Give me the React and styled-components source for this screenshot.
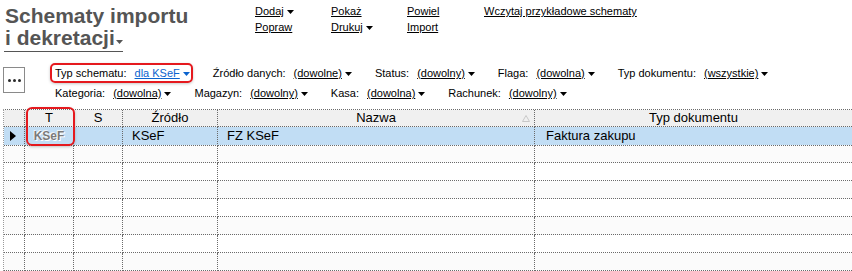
import React from 'react';
import styled, { createGlobalStyle } from 'styled-components';

const Global = createGlobalStyle`
  html, body { margin: 0; padding: 0; background: #fff; }
  body {
    font-family: "Liberation Sans", Arial, sans-serif;
    color: #000;
    width: 852px;
    height: 271px;
    overflow: hidden;
  }
  *, *::before, *::after { box-sizing: border-box; }
`;

const Page = styled.div`
  display: flex;
  flex-direction: column;
`;

/* ---------- top bar ---------- */
const TopBar = styled.div`
  display: flex;
  height: 63px;
  padding-left: 5px;
`;

const TitleBlock = styled.div`
  width: 250px;
  padding-top: 5px;
`;

const Title = styled.h1`
  margin: 0;
  font-size: 21px;
  line-height: 22px;
  font-weight: bold;
  color: #555;
  white-space: nowrap;
`;

const TitleMenu = styled.span`
  display: inline-block;
  margin-left: -1px;
  padding-left: 1px;
  padding-bottom: 2px;
  border-bottom: 1px solid #555;
`;

const TitleCaret = styled.svg`
  display: inline-block;
  margin-left: 1px;
  vertical-align: 1px;
`;

const Actions = styled.div`
  display: grid;
  grid-template-columns: 76px 76px 77px auto;
  grid-auto-rows: 16px;
  padding-top: 3px;
  font-size: 11px;
  line-height: 16px;
`;

const ActionLink = styled.a`
  color: #000;
  text-decoration: underline;
  white-space: nowrap;
  cursor: pointer;
`;

const Caret = styled.svg`
  display: inline-block;
  margin-left: 3px;
  vertical-align: 1px;
`;

/* ---------- filters ---------- */
const FilterArea = styled.div`
  display: flex;
  align-items: flex-start;
  height: 46px;
  padding-left: 3px;
`;

const MoreButton = styled.button`
  width: 22px;
  height: 26px;
  margin-top: 4px;
  padding: 0;
  border: 1px solid #8a8a8a;
  background: #fff;
  display: flex;
  align-items: center;
  justify-content: center;
  gap: 2px;
`;

const Dot = styled.span`
  width: 3px;
  height: 3px;
  border-radius: 50%;
  background: #2a2a2a;
`;

const FilterRows = styled.div`
  margin-left: 30px;
  display: flex;
  flex-direction: column;
  font-size: 11px;
  line-height: 20px;
`;

const FilterRow = styled.div`
  display: flex;
  gap: ${(p) => p.$gap}px;
  white-space: nowrap;
`;

const FilterItem = styled.div`
  position: relative;
  display: flex;
  gap: 8px;

  ${(p) =>
    p.$highlight &&
    `
    &::after {
      content: "";
      position: absolute;
      left: -5px;
      right: -3px;
      top: 0;
      bottom: 0;
      border: 2px solid #e5191e;
      border-radius: 5px;
      box-shadow: 0 1px 3px rgba(0,0,0,0.22);
      pointer-events: none;
    }
  `}
`;

const FilterLabel = styled.span`
  color: #000;
`;

const FilterValue = styled.a`
  color: ${(p) => (p.$active ? '#0b63ce' : '#000')};
  text-decoration: underline;
  cursor: pointer;
`;

/* ---------- grid ---------- */
const Grid = styled.div`
  margin-left: 3px;
  width: 849px;
  border-left: 1px dotted #9a9a9a;
  border-top: 1px dotted #6a6a6a;
  font-size: 13px;
`;

const rowBg = {
  header: '#f0f0f0',
  selected: '#c1ddf4',
  odd: '#fbfbfb',
  even: '#ffffff',
};

const Row = styled.div`
  display: grid;
  grid-template-columns: 21px 49px 49px 95px 317px 317px;
  height: ${(p) => (p.$kind === 'header' ? 17 : 18)}px;
  line-height: ${(p) => (p.$kind === 'header' ? 16 : 17)}px;
  background: ${(p) => rowBg[p.$kind]};
`;

const Cell = styled.div`
  position: ${(p) => (p.$rel ? 'relative' : 'static')};
  border-right: 1px dotted #6a6a6a;
  border-bottom: 1px dotted #6a6a6a;
  padding-left: ${(p) => (p.$center ? 0 : p.$pad ?? 9)}px;
  text-align: ${(p) => (p.$center ? 'center' : 'left')};
  white-space: nowrap;
  overflow: visible;
  &:last-child { border-right: none; }
`;

const HeaderHighlight = styled.span`
  position: absolute;
  top: -3px;
  left: 1px;
  width: 49px;
  height: 39px;
  border: 2px solid #e5191e;
  border-radius: 6px;
  box-shadow: 0 1px 3px rgba(0,0,0,0.22);
  z-index: 2;
  pointer-events: none;
`;

const SortMark = styled.svg`
  position: absolute;
  right: 4px;
  top: 5px;
`;

const MarkerCell = styled(Cell)`
  display: flex;
  align-items: center;
  padding-left: 6px;
`;

const Badge = styled.span`
  font-weight: bold;
  font-size: 12px;
  color: #7a7a7a;
  text-shadow: 0 0 1px #fff, 1px 1px 0 #fff, -1px -1px 0 rgba(255,255,255,0.7);
`;

const Down = () => (
  <Caret width="7" height="4" viewBox="0 0 7 4">
    <polygon points="0,0 7,0 3.5,4" fill="currentColor" />
  </Caret>
);

const filtersRow1 = [
  { label: 'Typ schematu:', value: 'dla KSeF', active: true, highlight: true },
  { label: 'Źródło danych:', value: '(dowolne)' },
  { label: 'Status:', value: '(dowolny)' },
  { label: 'Flaga:', value: '(dowolna)' },
  { label: 'Typ dokumentu:', value: '(wszystkie)' },
];

const filtersRow2 = [
  { label: 'Kategoria:', value: '(dowolna)' },
  { label: 'Magazyn:', value: '(dowolny)' },
  { label: 'Kasa:', value: '(dowolna)' },
  { label: 'Rachunek:', value: '(dowolny)' },
];

const Filter = ({ f }) => (
  <FilterItem $highlight={f.highlight}>
    <FilterLabel>{f.label}</FilterLabel>
    <FilterValue $active={f.active}>
      {f.value}
      <Down />
    </FilterValue>
  </FilterItem>
);

const EmptyRow = ({ kind }) => (
  <Row $kind={kind}>
    <Cell />
    <Cell />
    <Cell />
    <Cell />
    <Cell />
    <Cell />
  </Row>
);

export default function App() {
  return (
    <Page>
      <Global />
      <TopBar>
        <TitleBlock>
          <Title>
            Schematy importu
            <br />
            <TitleMenu>
              i dekretacji
              <TitleCaret width="7" height="4" viewBox="0 0 7 4">
                <polygon points="0,0 7,0 3.5,4" fill="#555" />
              </TitleCaret>
            </TitleMenu>
          </Title>
        </TitleBlock>
        <Actions>
          <div><ActionLink>Dodaj</ActionLink><Down /></div>
          <div><ActionLink>Pokaż</ActionLink></div>
          <div><ActionLink>Powiel</ActionLink></div>
          <div><ActionLink>Wczytaj przykładowe schematy</ActionLink></div>
          <div><ActionLink>Popraw</ActionLink></div>
          <div><ActionLink>Drukuj</ActionLink><Down /></div>
          <div><ActionLink>Import</ActionLink></div>
          <div />
        </Actions>
      </TopBar>

      <FilterArea>
        <MoreButton aria-label="więcej">
          <Dot />
          <Dot />
          <Dot />
        </MoreButton>
        <FilterRows>
          <FilterRow $gap={23}>
            {filtersRow1.map((f) => (
              <Filter key={f.label} f={f} />
            ))}
          </FilterRow>
          <FilterRow $gap={23}>
            {filtersRow2.map((f) => (
              <Filter key={f.label} f={f} />
            ))}
          </FilterRow>
        </FilterRows>
      </FilterArea>

      <Grid>
        <Row $kind="header">
          <Cell />
          <Cell $center $rel>
            T
            <HeaderHighlight />
          </Cell>
          <Cell $center>S</Cell>
          <Cell $center>Źródło</Cell>
          <Cell $center $rel>
            Nazwa
            <SortMark width="8" height="7" viewBox="0 0 8 7">
              <polygon points="4,0.5 7.5,6.5 0.5,6.5" fill="none" stroke="#c8c8c8" strokeWidth="1" />
            </SortMark>
          </Cell>
          <Cell $center>Typ dokumentu</Cell>
        </Row>
        <Row $kind="selected">
          <MarkerCell>
            <svg width="6" height="10" viewBox="0 0 6 10">
              <polygon points="0,0 6,5 0,10" fill="#000" />
            </svg>
          </MarkerCell>
          <Cell $center>
            <Badge>KSeF</Badge>
          </Cell>
          <Cell />
          <Cell>KSeF</Cell>
          <Cell>FZ KSeF</Cell>
          <Cell $pad={11}>Faktura zakupu</Cell>
        </Row>
        <EmptyRow kind="odd" />
        <EmptyRow kind="even" />
        <EmptyRow kind="odd" />
        <EmptyRow kind="even" />
        <EmptyRow kind="odd" />
        <EmptyRow kind="even" />
        <EmptyRow kind="odd" />
      </Grid>
    </Page>
  );
}
